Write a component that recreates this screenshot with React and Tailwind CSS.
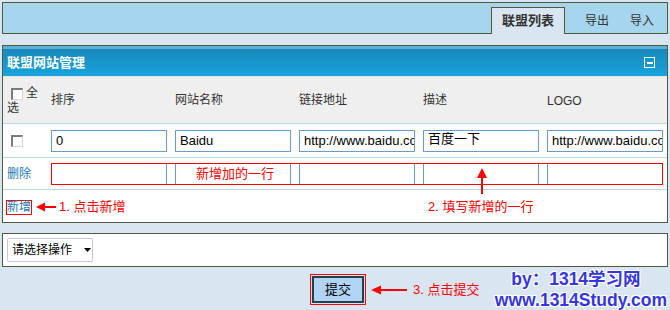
export default function App() {
  const Check = () => (
    <span className="inline-block w-[12px] h-[12px] bg-white border-t-2 border-l-2 border-r border-b border-t-[#7a7a7a] border-l-[#7a7a7a] border-r-[#d6d6d6] border-b-[#d6d6d6] align-middle" />
  );
  const Inp = ({ children, cls = "" }) => (
    <div className={"w-[116px] h-[22px] shrink-0 border border-[#6b9bcd] bg-white pl-[4px] flex items-center text-[13px] text-black overflow-hidden whitespace-nowrap " + cls}>
      {children}
    </div>
  );
  return (
    <div className="w-[670px] h-[310px] overflow-hidden bg-[#dae5f2] p-[2px] font-['Liberation_Sans','Noto_Sans_CJK_SC',sans-serif] text-[12px] text-[#333]">
      {/* top bar */}
      <div className="h-[32px] border border-[#4f5b3e] bg-[#a6d6ee] flex items-end justify-end">
        <div className="h-[27px] w-[74px] -mb-px border border-b-0 border-[#4f5b3e] bg-[#dae5f2] flex items-center justify-center font-bold text-[13px] text-[#333]">
          联盟列表
        </div>
        <div className="h-[27px] -mb-px flex items-center ml-[20px]">导出</div>
        <div className="h-[27px] -mb-px flex items-center ml-[21px] mr-[13px]">导入</div>
      </div>

      {/* panel */}
      <div className="mt-[11px] border border-[#4f5b3e] bg-white">
        <div className="h-[30px] border-t-[3px] border-[#5cb0d4] bg-linear-to-b from-[#1987ba] to-[#16a5db] flex items-center justify-between pl-[4px] pr-[12px]">
          <span className="text-white font-bold text-[13px]">联盟网站管理</span>
          <span className="w-[11px] h-[11px] border border-white flex items-center justify-center">
            <span className="w-[6px] h-[2px] bg-white" />
          </span>
        </div>

        <div className="relative">
          {/* header row */}
          <div className="h-[48px] border-t border-b border-t-[#e0e6ec] border-b-[#b9d9ec] bg-[#efefef] flex items-center">
            <div className="w-[48px] shrink-0 self-start pt-[9px] pl-[4px] leading-[15px]">
              <span className="ml-[4px] mr-[3px]"><Check /></span>全<br />选
            </div>
            <div className="w-[124px] shrink-0">排序</div>
            <div className="w-[124px] shrink-0">网站名称</div>
            <div className="w-[124px] shrink-0">链接地址</div>
            <div className="w-[124px] shrink-0">描述</div>
            <div className="w-[120px] shrink-0 pt-[2px]">LOGO</div>
          </div>

          {/* row 1 */}
          <div className="h-[34px] border-b border-[#b9d9ec] flex items-center">
            <div className="w-[48px] shrink-0 pl-[8px] flex items-center"><Check /></div>
            <div className="flex gap-[8px]">
              <Inp>0</Inp>
              <Inp>Baidu</Inp>
              <Inp>http://www.baidu.com</Inp>
              <Inp cls="pb-[3px]">百度一下</Inp>
              <Inp>http://www.baidu.com</Inp>
            </div>
          </div>

          {/* row 2 */}
          <div className="h-[32px] border-b border-[#b9d9ec] flex items-center">
            <div className="w-[48px] shrink-0 pl-[4px] text-[#1a78b5]">删除</div>
            <div className="relative h-[22px] flex gap-[8px]">
              <Inp />
              <Inp cls="justify-center pl-0 text-[13px] !text-[#ff0000]">新增加的一行</Inp>
              <Inp />
              <Inp />
              <Inp />
              <div className="absolute inset-y-0 left-0 w-[612px] border border-[#ff0000]" />
            </div>
          </div>

          {/* row 3 */}
          <div className="h-[32px] flex items-center pt-[2px]">
            <div className="w-[425px] shrink-0 pl-[3px] flex items-center">
              <span className="border border-[#ff0000] leading-[13px] text-[#1a78b5]">新增</span>
              <svg className="ml-[4px]" width="20" height="10" viewBox="0 0 20 10">
                <polygon points="0,5 9,0.5 9,9.5" fill="#ff0000" />
                <rect x="8" y="4" width="12" height="2" fill="#ff0000" />
              </svg>
              <span className="ml-[3px] text-[13px] text-[#ff0000]">1. 点击新增</span>
            </div>
            <span className="text-[13px] text-[#ff0000]">2. 填写新增的一行</span>
          </div>

          {/* arrow 2 */}
          <svg className="absolute left-[473px] top-[92px]" width="12" height="26" viewBox="0 0 12 26">
            <polygon points="6,0 11,10 1,10" fill="#ff0000" />
            <rect x="5" y="9" width="2" height="17" fill="#ff0000" />
          </svg>
        </div>
      </div>

      {/* action box */}
      <div className="mt-[10px] h-[34px] border border-[#4f5b3e] bg-white flex items-center pl-[4px]">
        <div className="w-[86px] h-[24px] border border-[#c8c8c8] rounded-[2px] flex items-center pl-[4px] text-[12px] text-black">
          请选择操作
          <svg className="ml-[12px]" width="7" height="4" viewBox="0 0 7 4">
            <polygon points="0,0 7,0 3.5,4" fill="#000" />
          </svg>
        </div>
      </div>

      {/* bottom row */}
      <div className="flex items-start">
        <div className="ml-[308px] mt-[7px] flex items-center">
          <div className="border border-[#ff0000] p-px">
            <div className="w-[52px] h-[27px] border-2 border-[#24404b] bg-[#b1d4f4] flex items-center justify-center text-[13px] text-black">
              提交
            </div>
          </div>
          <svg className="ml-[5px]" width="36" height="10" viewBox="0 0 36 10">
            <polygon points="0,5 10,0.5 10,9.5" fill="#ff0000" />
            <rect x="9" y="4" width="27" height="2" fill="#ff0000" />
          </svg>
          <span className="ml-[6px] text-[13px] text-[#ff0000]">3. 点击提交</span>
        </div>
        <div className="ml-auto mr-[1px] mt-[2px] text-center font-bold text-[17.5px] leading-[21px] text-[#3636e0] [text-shadow:1px_1px_0_#fff,-1px_-1px_0_#fff,1px_-1px_0_#fff,-1px_1px_0_#fff,0_0_2px_#fff]">
          <div className="pr-[10px]">by：1314学习网</div>
          <div>www.1314Study.com</div>
        </div>
      </div>
    </div>
  );
}
